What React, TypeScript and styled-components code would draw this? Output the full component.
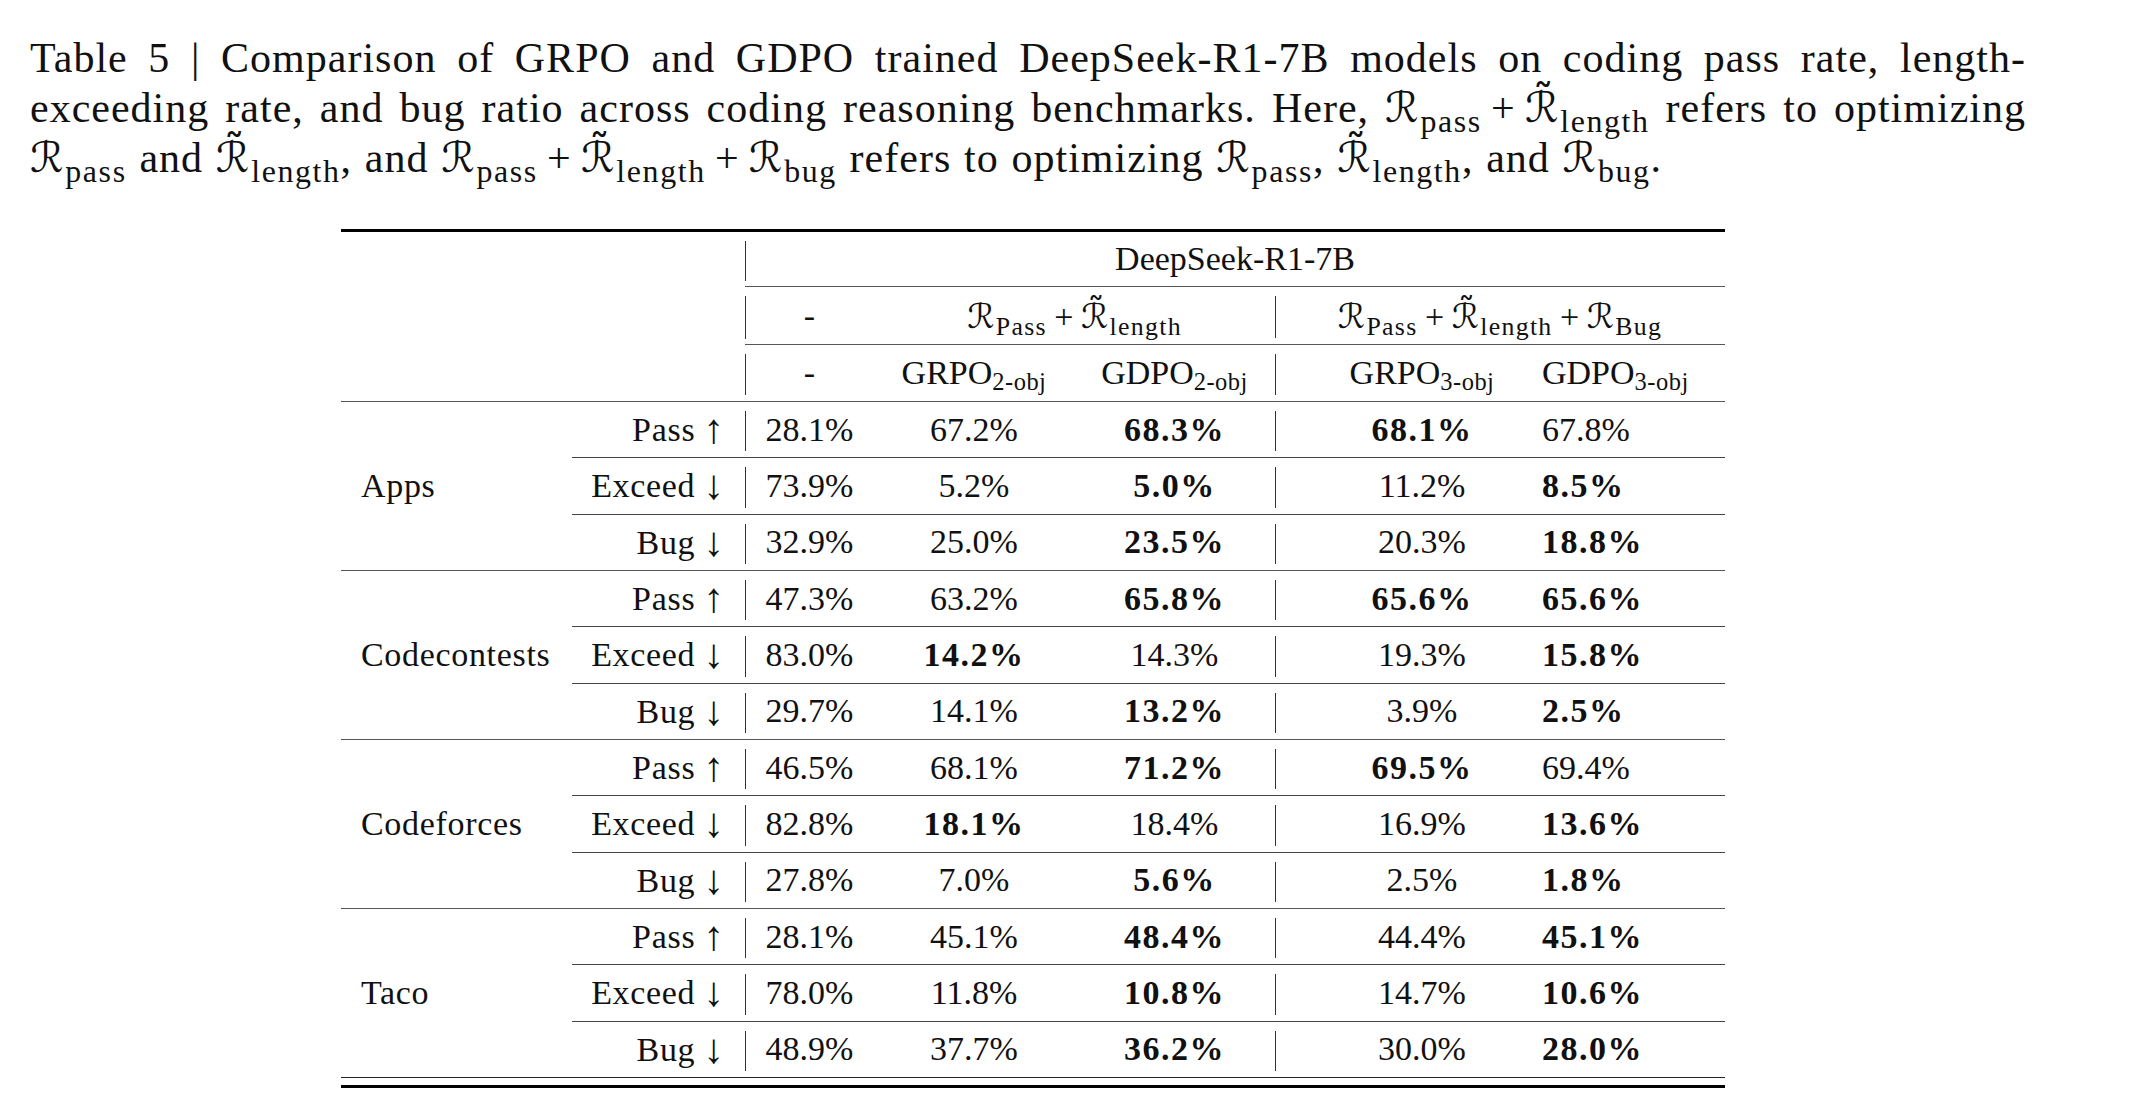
import React from "react";
import styled, { createGlobalStyle } from "styled-components";

const GlobalStyle = createGlobalStyle`
  html, body {
    margin: 0;
    padding: 0;
    background: #fff;
  }
  body {
    font-family: "Liberation Serif", "DejaVu Serif", serif;
    color: #111;
  }
`;

const Page = styled.main`
  width: 2146px;
  min-height: 1120px;
  box-sizing: border-box;
  padding: 34px 0 0 30px;
`;

const Caption = styled.p`
  margin: 0;
  width: 1996px;
  font-size: 42px;
  line-height: 49px;
  letter-spacing: 0.024em;
  word-spacing: 0.03em;
`;

const CaptionLine = styled.span<{ $justify?: boolean }>`
  display: block;
  text-align: ${(p) => (p.$justify ? "justify" : "left")};
  text-align-last: ${(p) => (p.$justify ? "justify" : "left")};
`;

const Cal = styled.span`
  font-family: "DejaVu Serif", "DejaVu Sans", serif;
  letter-spacing: 0.02em;
`;

const Sub = styled.sub`
  font-size: 0.76em;
  line-height: 0;
  vertical-align: -0.3em;
  margin-left: 0.03em;
  letter-spacing: 0.05em;
`;

const Plus = styled.span`
  margin: 0 0.22em;
`;

// calligraphic R, optionally with a tilde accent (combining U+0303)
const R = ({ sub, tilde }: { sub: string; tilde?: boolean }) => (
  <span>
    <Cal>{tilde ? "ℛ\u0303" : "ℛ"}</Cal>
    <Sub>{sub}</Sub>
  </span>
);

const TableWrap = styled.div`
  width: 1384px;
  margin: 46px 0 0 311px;
`;

const Table = styled.table`
  width: 1384px;
  table-layout: fixed;
  border-collapse: collapse;
  font-size: 34px;
  color: #111;
`;

const HeadRow = styled.tr<{ $h: number; $top?: boolean; $under?: boolean }>`
  & > th {
    height: ${(p) => p.$h}px;
    ${(p) => (p.$top ? "border-top: 3px solid #000;" : "")}
  }
  & > th.ruled {
    border-bottom: 1px solid #555;
  }
  ${(p) => (p.$under ? "& > th { border-bottom: 1px solid #555; }" : "")}
`;

const barRule = `
  &::after {
    content: "";
    position: absolute;
    right: -1px;
    top: 9px;
    bottom: 6px;
    width: 1px;
    background: #333;
  }
`;

const HeadCell = styled.th<{ $align?: "left" | "center"; $bar?: boolean; $shift?: number }>`
  position: relative;
  padding: 0 0 0 ${(p) => p.$shift ?? 0}px;
  font-weight: normal;
  vertical-align: middle;
  text-align: ${(p) => p.$align ?? "center"};
  white-space: nowrap;
  ${(p) => (p.$bar ? barRule : "")}
`;

const BodyRow = styled.tr<{ $divider: "full" | "partial" }>`
  & > td {
    height: 55.35px;
    border-top: 1px solid ${(p) => (p.$divider === "full" ? "#555" : "#444")};
  }
`;

const GroupCell = styled.td`
  padding: 0 0 0 20px;
  text-align: left;
  vertical-align: middle;
  white-space: nowrap;
  letter-spacing: 0.02em;
`;

const LabelCell = styled.td`
  position: relative;
  padding: 0 20px 0 0;
  text-align: right;
  vertical-align: middle;
  white-space: nowrap;
  letter-spacing: 0.02em;
  ${barRule}
`;

const ValueCell = styled.td<{ $bold?: boolean; $align?: "left" | "center"; $bar?: boolean; $shift?: number }>`
  position: relative;
  padding: 0 0 0 ${(p) => p.$shift ?? 0}px;
  text-align: ${(p) => p.$align ?? "center"};
  vertical-align: middle;
  white-space: nowrap;
  font-weight: ${(p) => (p.$bold ? "bold" : "normal")};
  letter-spacing: ${(p) => (p.$bold ? "0.045em" : "0")};
  ${(p) => (p.$bar ? barRule : "")}
`;

const Arrow = styled.span`
  display: inline-block;
  margin-left: 0.2em;
  font-family: "Liberation Serif", "DejaVu Serif", serif;
  font-size: 1.22em;
  line-height: 1;
  vertical-align: -0.06em;
`;

const ObjSub = styled.sub`
  font-size: 0.72em;
  line-height: 0;
  vertical-align: -0.25em;
  letter-spacing: 0.02em;
`;

const DoubleRule = styled.div`
  height: 0;
  margin-top: 7px;
  border-top: 3px solid #000;
`;

const groups = [
  {
    name: "Apps",
    rows: [
      ["Pass", "28.1%", "67.2%", "*68.3%", "*68.1%", "67.8%"],
      ["Exceed", "73.9%", "5.2%", "*5.0%", "11.2%", "*8.5%"],
      ["Bug", "32.9%", "25.0%", "*23.5%", "20.3%", "*18.8%"],
    ],
  },
  {
    name: "Codecontests",
    rows: [
      ["Pass", "47.3%", "63.2%", "*65.8%", "*65.6%", "*65.6%"],
      ["Exceed", "83.0%", "*14.2%", "14.3%", "19.3%", "*15.8%"],
      ["Bug", "29.7%", "14.1%", "*13.2%", "3.9%", "*2.5%"],
    ],
  },
  {
    name: "Codeforces",
    rows: [
      ["Pass", "46.5%", "68.1%", "*71.2%", "*69.5%", "69.4%"],
      ["Exceed", "82.8%", "*18.1%", "18.4%", "16.9%", "*13.6%"],
      ["Bug", "27.8%", "7.0%", "*5.6%", "2.5%", "*1.8%"],
    ],
  },
  {
    name: "Taco",
    rows: [
      ["Pass", "28.1%", "45.1%", "*48.4%", "44.4%", "*45.1%"],
      ["Exceed", "78.0%", "11.8%", "*10.8%", "14.7%", "*10.6%"],
      ["Bug", "48.9%", "37.7%", "*36.2%", "30.0%", "*28.0%"],
    ],
  },
];

const cellProps = [
  {},
  {},
  { $bar: true },
  { $shift: 47 },
  { $align: "left" as const, $shift: 20 },
];

const Value = ({ raw, idx }: { raw: string; idx: number }) => {
  const bold = raw.startsWith("*");
  return (
    <ValueCell $bold={bold} {...cellProps[idx]}>
      {bold ? raw.slice(1) : raw}
    </ValueCell>
  );
};

export default function App() {
  return (
    <>
      <GlobalStyle />
      <Page>
        <Caption>
          <CaptionLine $justify>
            Table 5 | Comparison of GRPO and GDPO trained DeepSeek-R1-7B models on coding pass rate, length-
          </CaptionLine>
          <CaptionLine $justify>
            exceeding rate, and bug ratio across coding reasoning benchmarks. Here, <R sub="pass" />
            <Plus>+</Plus>
            <R sub="length" tilde /> refers to optimizing
          </CaptionLine>
          <CaptionLine>
            <R sub="pass" /> and <R sub="length" tilde />, and <R sub="pass" />
            <Plus>+</Plus>
            <R sub="length" tilde />
            <Plus>+</Plus>
            <R sub="bug" /> refers to optimizing <R sub="pass" />, <R sub="length" tilde />, and <R sub="bug" />.
          </CaptionLine>
        </Caption>

        <TableWrap>
          <Table>
            <colgroup>
              <col style={{ width: 231 }} />
              <col style={{ width: 173 }} />
              <col style={{ width: 129 }} />
              <col style={{ width: 200 }} />
              <col style={{ width: 201 }} />
              <col style={{ width: 247 }} />
              <col style={{ width: 203 }} />
            </colgroup>
            <thead>
              <HeadRow $h={54} $top>
                <HeadCell colSpan={2} $bar />
                <HeadCell colSpan={5} className="ruled">
                  DeepSeek-R1-7B
                </HeadCell>
              </HeadRow>
              <HeadRow $h={57}>
                <HeadCell colSpan={2} $bar />
                <HeadCell className="ruled">-</HeadCell>
                <HeadCell colSpan={2} className="ruled" $bar>
                  <R sub="Pass" />
                  <Plus>+</Plus>
                  <R sub="length" tilde />
                </HeadCell>
                <HeadCell colSpan={2} className="ruled">
                  <R sub="Pass" />
                  <Plus>+</Plus>
                  <R sub="length" tilde />
                  <Plus>+</Plus>
                  <R sub="Bug" />
                </HeadCell>
              </HeadRow>
              <HeadRow $h={56} $under>
                <HeadCell colSpan={2} $bar />
                <HeadCell>-</HeadCell>
                <HeadCell>
                  GRPO<ObjSub>2-obj</ObjSub>
                </HeadCell>
                <HeadCell $bar>
                  GDPO<ObjSub>2-obj</ObjSub>
                </HeadCell>
                <HeadCell $shift={47}>
                  GRPO<ObjSub>3-obj</ObjSub>
                </HeadCell>
                <HeadCell $align="left" $shift={20}>
                  GDPO<ObjSub>3-obj</ObjSub>
                </HeadCell>
              </HeadRow>
            </thead>
            <tbody>
              {groups.map((g, gi) =>
                g.rows.map((row, ri) => (
                  <BodyRow key={`${gi}-${ri}`} $divider={ri === 0 ? "full" : "partial"}>
                    {ri === 0 && <GroupCell rowSpan={3}>{g.name}</GroupCell>}
                    <LabelCell>
                      {row[0]}
                      <Arrow>{row[0] === "Pass" ? "↑" : "↓"}</Arrow>
                    </LabelCell>
                    {row.slice(1).map((v, vi) => (
                      <Value key={vi} raw={v} idx={vi} />
                    ))}
                  </BodyRow>
                ))
              )}
              <tr>
                <td colSpan={7} style={{ height: 0, padding: 0, borderTop: "1px solid #222" }} />
              </tr>
            </tbody>
          </Table>
          <DoubleRule />
        </TableWrap>
      </Page>
    </>
  );
}
